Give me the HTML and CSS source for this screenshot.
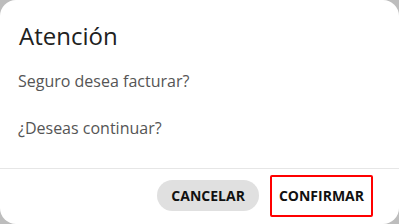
FILE: index.html
```html
<!DOCTYPE html>
<html lang="es">
<head>
    <meta charset="UTF-8">
    <meta name="viewport" content="width=device-width, initial-scale=1.0">
    <title>Atención</title>
    <link rel="stylesheet" href="styles.css">
</head>
<body>

    <!-- Confirm dialog -->
    <div class="dialog">
        <div class="dialog-body">
            <h2 class="dialog-title">Atención</h2>
            <p class="dialog-text first">Seguro desea facturar?</p>
            <p class="dialog-text">¿Deseas continuar?</p>
        </div>
        <div class="dialog-actions">
            <button class="btn btn-cancel">Cancelar</button>
            <button class="btn btn-confirm">Confirmar</button>
        </div>
    </div>

</body>
</html>
```

FILE: styles.css
```css
/* Page behind the dialog */
body {
    margin: 0;
    background-color: #bdbdbd;
    font-family: "Open Sans", Arial, sans-serif;
}

/* Dialog card */
.dialog {
    width: 399px;
    height: 224px;
    background-color: #fff;
    border-radius: 16px;
    display: flex;
    flex-direction: column;
    overflow: hidden;
}

.dialog-body {
    padding: 20px 18px 0 18px;
    height: 148px;
    border-bottom: 1px solid #e6e6e6;
}

.dialog-title {
    margin: 0 0 17px 1px;
    font-size: 24px;
    line-height: 32px;
    font-weight: 400;
    color: #212121;
}

.dialog-text {
    margin: 0;
    font-size: 16px;
    line-height: 24px;
    color: #555;
}

.dialog-text.first {
    margin-bottom: 23px;
}

/* Buttons row */
.dialog-actions {
    flex: 1;
    display: flex;
    justify-content: flex-end;
    align-items: center;
    gap: 11px;
    padding: 0 26px 2px 0;
}

.btn {
    font-family: "Open Sans", Arial, sans-serif;
    font-size: 14px;
    font-weight: 700;
    text-transform: uppercase;
    color: #111;
    cursor: pointer;
}

.btn-cancel {
    background-color: #e0e0e0;
    border: none;
    border-radius: 16px;
    height: 31px;
    padding: 0 14px;
}

.btn-confirm {
    background-color: #fff;
    border: 2px solid #ff0000;
    border-radius: 2px;
    height: 42px;
    padding: 0 7px;
}
```
